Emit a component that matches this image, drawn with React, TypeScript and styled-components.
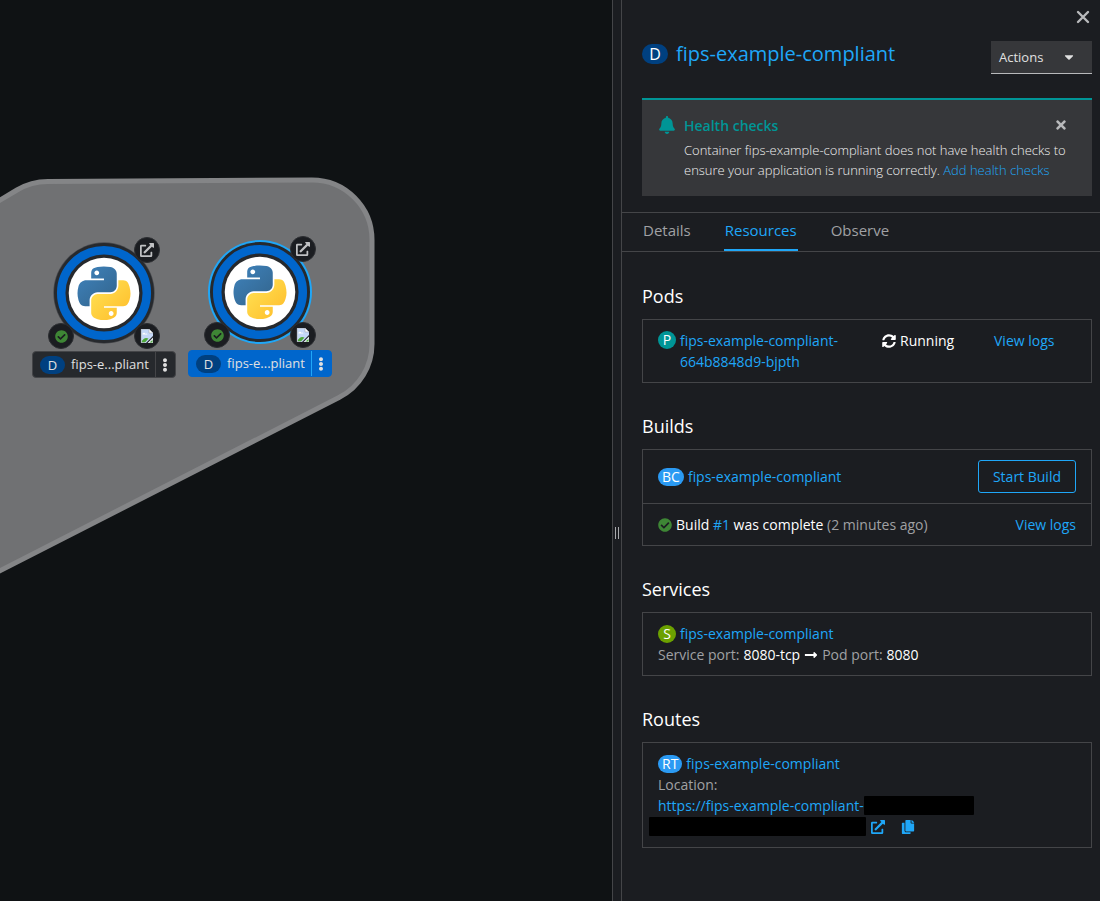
import React from "react";
import styled, { createGlobalStyle } from "styled-components";
import {
  FaBell,
  FaCaretDown,
  FaCheckCircle,
  FaCopy,
  FaEllipsisV,
  FaExternalLinkAlt,
  FaLongArrowAltRight,
  FaSyncAlt,
  FaTimes,
} from "react-icons/fa";

const color = {
  canvas: "#0f1214",
  panel: "#1b1d21",
  raised: "#36373a",
  line: "#444548",
  text: "#e0e0e0",
  strong: "#ffffff",
  muted: "#a0a1a4",
  link: "#1fa7f8",
  blue: "#0066cc",
  navy: "#004080",
  teal: "#009596",
  green: "#3e8635",
};

const GlobalStyle = createGlobalStyle`
  *, *::before, *::after { box-sizing: border-box; }
  body {
    margin: 0;
    background: ${color.canvas};
    color: ${color.text};
    font: 400 14px/21px "Open Sans", "Liberation Sans", sans-serif;
  }
  button { font: inherit; color: inherit; cursor: pointer; }
  h1, h2, h3, p { margin: 0; font-weight: 400; }
  svg { display: block; }
`;

const Page = styled.div`
  display: grid;
  grid-template-columns: minmax(0, 1fr) 10px 478px;
  min-height: 100vh;
`;

/* Topology canvas */

const Canvas = styled.main`
  position: relative;
  overflow: hidden;
  background: ${color.canvas};
`;

const Hull = styled.svg`
  position: absolute;
  inset: 0;
  width: 100%;
  height: 100%;
`;

const NodeRoot = styled.div<{ $x: number; $y: number }>`
  position: absolute;
  left: ${(p) => p.$x}px;
  top: ${(p) => p.$y}px;
  width: 144px;
  display: flex;
  flex-direction: column;
  align-items: center;
  gap: 6px;
`;

const Disc = styled.div`
  position: relative;
  width: 104px;
  height: 104px;
`;

const Decorator = styled.button<{ $side: "left" | "right"; $edge: "top" | "bottom" }>`
  position: absolute;
  ${(p) => p.$side}: -4px;
  ${(p) => p.$edge}: -4px;
  display: grid;
  place-items: center;
  width: 26px;
  height: 26px;
  padding: 0;
  border: 1px solid #2c2e32;
  border-radius: 50%;
  background: ${color.panel};
  color: #c0c1c3;
`;

const NodeLabel = styled.div<{ $selected?: boolean }>`
  display: flex;
  align-items: center;
  width: 100%;
  height: 27px;
  padding-left: 7px;
  border: 1px solid ${(p) => (p.$selected ? color.blue : color.line)};
  border-radius: 4px;
  background: ${(p) => (p.$selected ? color.blue : "#26292d")};
  font-size: 13px;
`;

const NodeKind = styled.span`
  width: 25px;
  height: 18px;
  border-radius: 9px;
  background: ${color.navy};
  line-height: 18px;
  text-align: center;
`;

const NodeName = styled.span`
  flex: 1;
  text-align: center;
  white-space: nowrap;
`;

const NodeMenu = styled.button<{ $selected?: boolean }>`
  display: grid;
  place-items: center;
  width: 20px;
  height: 100%;
  padding: 0 2px 0 0;
  border: 0;
  border-left: 1px solid ${(p) => (p.$selected ? color.link : color.line)};
  background: none;
`;

/* Splitter */

const Splitter = styled.div`
  display: flex;
  justify-content: center;
  align-items: center;
  gap: 2px;
  padding-top: 164px;
  border: 1px solid ${color.line};
  border-width: 0 1px;
  background: ${color.panel};
`;

const Grip = styled.span`
  width: 1px;
  height: 12px;
  background: #a8a9ac;
`;

/* Side panel */

const Panel = styled.aside`
  background: ${color.panel};
`;

const CloseRow = styled.div`
  display: flex;
  justify-content: flex-end;
  height: 33px;
  padding: 8px 8px 0 0;
`;

const IconButton = styled.button`
  display: grid;
  place-items: center;
  width: 18px;
  height: 18px;
  padding: 0;
  border: 0;
  background: none;
  color: #b8b9bb;
`;

const Header = styled.header`
  display: flex;
  justify-content: space-between;
  padding: 8px 8px 24px 20px;
`;

const Title = styled.h1`
  display: flex;
  align-items: center;
  gap: 8px;
  height: 26px;
  font-size: 20px;
  line-height: 26px;
`;

const TitleKind = styled.span`
  width: 26px;
  height: 20px;
  border-radius: 10px;
  background: ${color.navy};
  color: ${color.strong};
  font-size: 16px;
  line-height: 20px;
  text-align: center;
`;

const Link = styled.a`
  color: ${color.link};
  text-decoration: none;
`;

const ActionsButton = styled.button`
  display: flex;
  align-items: center;
  justify-content: space-between;
  width: 101px;
  height: 33px;
  padding: 0 16px 0 8px;
  border: 0;
  border-bottom: 1px solid #b8b9bb;
  background: ${color.raised};
  font-size: 13px;
`;

const Alert = styled.section`
  display: grid;
  grid-template-columns: 18px minmax(0, 1fr) 18px;
  column-gap: 8px;
  margin: 0 8px 16px 20px;
  padding: 16px 22px 16px 16px;
  border-top: 2px solid ${color.teal};
  background: ${color.raised};
`;

const AlertIcon = styled.span`
  color: ${color.teal};
`;

const AlertTitle = styled.h2`
  color: ${color.teal};
  font-size: 14px;
  font-weight: 600;
  line-height: 20px;
`;

const AlertText = styled.p`
  grid-column: 2 / 4;
  padding-top: 4px;
  color: #f0f0f0;
  font-size: 13px;
  font-weight: 300;
  line-height: 20px;
`;

const Tabs = styled.nav`
  display: flex;
  gap: 32px;
  height: 40px;
  padding-left: 20px;
  border: 1px solid ${color.line};
  border-width: 1px 0;
`;

const Tab = styled.button<{ $active?: boolean }>`
  height: 38px;
  padding: 0 1px 2px;
  border: 0;
  border-bottom: 2px solid ${(p) => (p.$active ? color.link : "transparent")};
  background: none;
  color: ${(p) => (p.$active ? color.link : color.muted)};
  font-size: 15px;
`;

const Content = styled.div`
  display: flex;
  flex-direction: column;
  gap: 31px;
  padding: 32px 8px 32px 20px;
`;

const SectionTitle = styled.h2`
  padding-bottom: 11px;
  color: ${color.strong};
  font-size: 18px;
  font-weight: 500;
  line-height: 24px;
`;

const Box = styled.div`
  border: 1px solid ${color.line};
`;

const Row = styled.div`
  display: flex;
  align-items: center;
  justify-content: space-between;
  padding: 10px 15px;

  & + & {
    border-top: 1px solid ${color.line};
  }
`;

const Stack = styled.div`
  display: flex;
  flex-direction: column;
  padding: 10px 15px;
`;

const PodRow = styled.div`
  display: grid;
  grid-template-columns: 2fr 1fr 1fr;
  padding: 10px 0;
`;

const Cell = styled.div`
  padding: 0 15px;
`;

const Inline = styled.div<{ $top?: boolean }>`
  display: flex;
  align-items: ${(p) => (p.$top ? "flex-start" : "center")};
  gap: 4px;
  white-space: ${(p) => (p.$top ? "normal" : "nowrap")};
`;

const Kind = styled.span<{ $bg: string }>`
  flex: none;
  min-width: 18px;
  height: 18px;
  margin-top: 1px;
  padding: 0 4px;
  border-radius: 9px;
  background: ${(p) => p.$bg};
  color: ${color.strong};
  line-height: 18px;
  text-align: center;
`;

const Strong = styled.span`
  color: ${color.strong};
`;

const Muted = styled.span`
  color: ${color.muted};
`;

const OutlineButton = styled.button`
  height: 33px;
  padding: 0 14px;
  border: 1px solid ${color.link};
  border-radius: 3px;
  background: none;
  color: ${color.link};
`;

const AddressLine = styled.div`
  display: flex;
  align-items: center;
  height: 21px;
`;

const Redacted = styled.span<{ $w: number; $out?: boolean }>`
  width: ${(p) => p.$w}px;
  height: 19px;
  margin-left: ${(p) => (p.$out ? -9 : 0)}px;
  border-radius: 1px;
  background: #000;
`;

const AddressIcons = styled.span`
  display: flex;
  gap: 16px;
  padding-left: 5px;
  color: ${color.link};
`;

const CloseIcon = () => (
  <svg width="18" height="18" viewBox="0 0 18 18">
    <path d="M4 4L14 14M14 4L4 14" fill="none" stroke="currentColor" strokeWidth="2.4" strokeLinecap="round" />
  </svg>
);

const BrokenImage = () => (
  <svg width="14" height="14" viewBox="0 0 14 14">
    <path d="M1 0h8l4 4v3L6 14H1z" fill="#c5d8f7" />
    <path d="M9 0v4h4z" fill="#fff" stroke="#a4a8ae" strokeWidth=".6" />
    <path d="M2.500 5.500a1.500 1.500 0 0 1 3-.6 1.300 1.300 0 0 1 2 .6z" fill="#fff" />
    <path d="M1.500 13Q4 7.500 8.500 9.500L5 13.500H1.500z" fill="#4ea83a" />
    <path d="M13 8.500V14H7.500z" fill="#e3e9f2" />
    <path d="M12.500 11v2.500H9.500z" fill="#4ea83a" />
    <path d="M9 .3H1.300v13.400H5" fill="none" stroke="#b4b9c0" strokeWidth=".7" />
  </svg>
);

const PythonDisc = ({ selected, id }: { selected?: boolean; id: string }) => (
  <svg width="104" height="104" viewBox="0 0 104 104" role="img" aria-label="Python">
    <defs>
      <linearGradient id={`${id}-b`} x1="0" y1="0" x2=".8" y2=".9">
        <stop offset="0" stopColor="#3f83bd" />
        <stop offset="1" stopColor="#346892" />
      </linearGradient>
      <linearGradient id={`${id}-y`} x1=".1" y1=".1" x2=".8" y2=".8">
        <stop offset="0" stopColor="#ffe052" />
        <stop offset="1" stopColor="#ffc331" />
      </linearGradient>
    </defs>
    <circle cx="52" cy="52" r={selected ? 52 : 50.700} fill={selected ? color.link : "#4a4c50"} />
    <circle cx="52" cy="52" r="50" fill="#26292d" />
    <circle cx="52" cy="52" r="42.800" fill="none" stroke={color.blue} strokeWidth="8.500" />
    <circle cx="52" cy="52" r="35.300" fill="#fff" />
    <g transform="translate(25.500 25.500) scale(.477)">
      <path
        fill={`url(#${id}-b)`}
        d="M54.919.001c-4.584.021-8.962.412-12.813 1.094C30.760 3.099 28.700 7.295 28.700 15.032v10.219h26.813v3.406H18.638c-7.793 0-14.616 4.684-16.750 13.594-2.462 10.213-2.571 16.586 0 27.250 1.906 7.938 6.458 13.594 14.250 13.594h9.219v-12.250c0-8.850 7.657-16.656 16.750-16.656h26.781c7.455 0 13.406-6.138 13.406-13.625v-25.531c0-7.266-6.130-12.725-13.406-13.938C64.282.328 59.502-.02 54.919.001zm-14.500 8.219c2.770 0 5.031 2.299 5.031 5.125 0 2.816-2.262 5.094-5.031 5.094-2.780 0-5.031-2.277-5.031-5.094 0-2.826 2.252-5.125 5.031-5.125z"
      />
      <path
        fill={`url(#${id}-y)`}
        d="M85.638 28.657v11.906c0 9.231-7.826 17-16.750 17H42.107c-7.336 0-13.406 6.278-13.406 13.625v25.531c0 7.266 6.319 11.540 13.406 13.625 8.488 2.496 16.627 2.947 26.781 0 6.750-1.954 13.406-5.888 13.406-13.625V86.501H55.513v-3.406h40.188c7.793 0 10.696-5.436 13.406-13.594 2.799-8.399 2.680-16.476 0-27.250-1.926-7.757-5.604-13.594-13.406-13.594zm-15.063 64.656c2.780 0 5.031 2.277 5.031 5.094 0 2.826-2.252 5.125-5.031 5.125-2.770 0-5.031-2.299-5.031-5.125 0-2.816 2.262-5.094 5.031-5.094z"
      />
    </g>
  </svg>
);

const TopologyNode = ({ x, y, id, selected }: { x: number; y: number; id: string; selected?: boolean }) => (
  <NodeRoot $x={x} $y={y}>
    <Disc>
      <PythonDisc id={id} selected={selected} />
      <Decorator $side="right" $edge="top" aria-label="Open URL">
        <FaExternalLinkAlt size={14} />
      </Decorator>
      <Decorator $side="left" $edge="bottom" aria-label="Build complete">
        <FaCheckCircle size={13} color={color.green} />
      </Decorator>
      <Decorator $side="right" $edge="bottom" aria-label="Edit source code">
        <BrokenImage />
      </Decorator>
    </Disc>
    <NodeLabel $selected={selected}>
      <NodeKind>D</NodeKind>
      <NodeName>fips-e...pliant</NodeName>
      <NodeMenu $selected={selected} aria-label="Node actions">
        <FaEllipsisV size={14} />
      </NodeMenu>
    </NodeLabel>
  </NodeRoot>
);

const NAME = "fips-example-compliant";

export default function App() {
  return (
    <>
      <GlobalStyle />
      <Page>
        <Canvas>
          <Hull>
            <path
              d="M-20 212 L17 190 A60 60 0 0 1 48 181.500 L312 180 A60 60 0 0 1 372 240 V343 A60 60 0 0 1 339 397.500 L-20 581"
              fill="#707173"
              stroke="#848587"
              strokeWidth="5"
            />
          </Hull>
          <TopologyNode x={32} y={241} id="n1" />
          <TopologyNode x={188} y={240} id="n2" selected />
        </Canvas>
        <Splitter role="separator" aria-orientation="vertical">
          <Grip />
          <Grip />
        </Splitter>
        <Panel>
          <CloseRow>
            <IconButton aria-label="Close">
              <CloseIcon />
            </IconButton>
          </CloseRow>
          <Header>
            <Title>
              <TitleKind>D</TitleKind>
              <Link href="#deployment">{NAME}</Link>
            </Title>
            <ActionsButton>
              Actions
              <FaCaretDown size={14} />
            </ActionsButton>
          </Header>
          <Alert>
            <AlertIcon>
              <FaBell size={18} />
            </AlertIcon>
            <AlertTitle>Health checks</AlertTitle>
            <IconButton aria-label="Dismiss">
              <FaTimes size={14} />
            </IconButton>
            <AlertText>
              Container {NAME} does not have health checks to ensure your application is running correctly.{" "}
              <Link href="#health">Add health checks</Link>
            </AlertText>
          </Alert>
          <Tabs>
            <Tab>Details</Tab>
            <Tab $active>Resources</Tab>
            <Tab>Observe</Tab>
          </Tabs>
          <Content>
            <section>
              <SectionTitle>Pods</SectionTitle>
              <Box>
                <PodRow>
                  <Cell>
                    <Inline $top>
                      <Kind $bg={color.teal}>P</Kind>
                      <Link href="#pod">
                        {NAME}-<wbr />
                        664b8848d9-bjpth
                      </Link>
                    </Inline>
                  </Cell>
                  <Cell>
                    <Inline>
                      <FaSyncAlt size={14} color={color.strong} />
                      <Strong>Running</Strong>
                    </Inline>
                  </Cell>
                  <Cell>
                    <Link href="#pod-logs">View logs</Link>
                  </Cell>
                </PodRow>
              </Box>
            </section>
            <section>
              <SectionTitle>Builds</SectionTitle>
              <Box>
                <Row>
                  <Inline>
                    <Kind $bg="#2b9af3">BC</Kind>
                    <Link href="#build-config">{NAME}</Link>
                  </Inline>
                  <OutlineButton>Start Build</OutlineButton>
                </Row>
                <Row>
                  <Inline>
                    <FaCheckCircle size={14} color={color.green} />
                    <span>
                      <Strong>Build</Strong> <Link href="#build-1">#1</Link> <Strong>was complete</Strong>{" "}
                      <Muted>(2 minutes ago)</Muted>
                    </span>
                  </Inline>
                  <Link href="#build-logs">View logs</Link>
                </Row>
              </Box>
            </section>
            <section>
              <SectionTitle>Services</SectionTitle>
              <Box>
                <Stack>
                  <Inline>
                    <Kind $bg="#6ca100">S</Kind>
                    <Link href="#service">{NAME}</Link>
                  </Inline>
                  <Inline>
                    <Muted>Service port:</Muted>
                    <Strong>8080-tcp</Strong>
                    <FaLongArrowAltRight size={14} color={color.strong} />
                    <Muted>Pod port:</Muted>
                    <Strong>8080</Strong>
                  </Inline>
                </Stack>
              </Box>
            </section>
            <section>
              <SectionTitle>Routes</SectionTitle>
              <Box>
                <Stack>
                  <Inline>
                    <Kind $bg="#2b9af3">RT</Kind>
                    <Link href="#route">{NAME}</Link>
                  </Inline>
                  <Muted>Location:</Muted>
                  <AddressLine>
                    <Link href="#location">https://{NAME}-</Link>
                    <Redacted $w={110} />
                  </AddressLine>
                  <AddressLine>
                    <Redacted $w={217} $out />
                    <AddressIcons>
                      <FaExternalLinkAlt size={14} />
                      <FaCopy size={14} />
                    </AddressIcons>
                  </AddressLine>
                </Stack>
              </Box>
            </section>
          </Content>
        </Panel>
      </Page>
    </>
  );
}
